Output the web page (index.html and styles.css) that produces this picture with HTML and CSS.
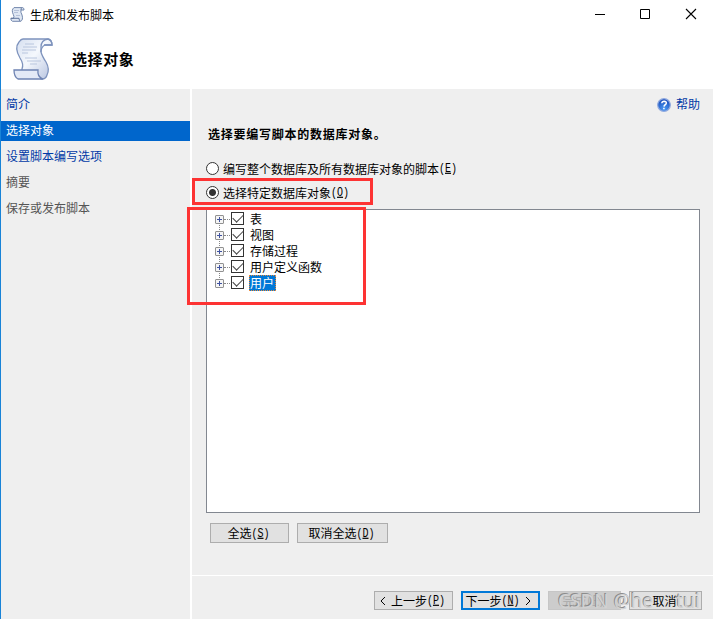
FILE: index.html
```html
<!DOCTYPE html>
<html lang="zh-CN">
<head>
<meta charset="utf-8">
<title>生成和发布脚本</title>
<link rel="stylesheet" href="styles.css">
</head>
<body>
<svg class="defs" width="0" height="0">
  <defs>
    <linearGradient id="paper" x1="0" y1="0" x2="1" y2="1">
      <stop offset="0" stop-color="#d5dff0"/><stop offset=".45" stop-color="#f5f8fd"/><stop offset="1" stop-color="#b4c1de"/>
    </linearGradient>
    <radialGradient id="ball" cx=".5" cy=".8" r=".8">
      <stop offset="0" stop-color="#4b9bf5"/><stop offset="1" stop-color="#1747b5"/>
    </radialGradient>
    <symbol id="scroll" viewBox="0 0 40 42">
      <path d="M10 1H35Q39 2 39 7L32 7Q28 9 28 14Q29 18 33 24Q37 31 34 37Q33 41 29 41L9 34V31Q11 26 7 20Q1 10 6 4Q8 1 10 1Z" fill="url(#paper)" stroke="#7e93bd" stroke-width="1.3"/>
      <path d="M35 1Q28 2 28 9V14M31 7H39Q39 2 35 1" fill="none" stroke="#7e93bd" stroke-width="1.3"/>
      <path d="M1 32H25Q24 39 30 41H5Q1 39 1 32Z" fill="#e3e9f6" stroke="#6e83b2" stroke-width="1.3"/>
      <path d="M12 6H21M10 9H24M9 12H23M9 15H15M12 20H24M14 23H28M17 26H24" stroke="#b9c6de" stroke-width="1"/>
    </symbol>
    <symbol id="scroll-small" viewBox="0 0 15 15">
      <path d="M4 .6H12.500Q14.300 1 14 3H11Q10.300 5 12 8Q13.500 13 10.500 14.300H2.500Q.6 13.500 .8 11.300H3.500Q4.500 9.500 3.300 7.500Q1 3 4 .6Z" fill="#dfe7f3" stroke="#7388ad"/>
      <path d="M1 11.300H9Q9 13.500 10.500 14.300M12 .8Q10.800 1.500 11 3" fill="none" stroke="#60759c"/>
      <path d="M4 3.500H9M4 5.500H8M6 8.500H10" stroke="#a9b8d0" stroke-width=".8"/>
    </symbol>
  </defs>
</svg>
<div class="window">
  <header class="header">
    <div class="titlebar">
      <svg class="title-icon"><use href="#scroll-small"/></svg>
      <span class="title">生成和发布脚本</span>
      <svg class="controls" width="102" height="12" viewBox="0 0 102 12" fill="none" stroke="#000">
        <path d="M0 6.500H10M45.500 1.500H54.500V10.500H45.500Z"/><path d="M91 1L101 11M101 1L91 11" stroke-width="1.1"/>
      </svg>
    </div>
    <div class="heading">
      <svg class="heading-icon"><use href="#scroll"/></svg>
      <h1>选择对象</h1>
    </div>
  </header>
  <div class="body">
    <nav class="steps">
      <a class="step">简介</a>
      <a class="step current">选择对象</a>
      <a class="step">设置脚本编写选项</a>
      <a class="step pending">摘要</a>
      <a class="step pending">保存或发布脚本</a>
    </nav>
    <main class="page">
      <section class="content">
        <div class="help">
          <svg width="14" height="14" viewBox="0 0 14 14"><circle cx="7" cy="7" r="6.300" fill="url(#ball)" stroke="#8fa9df" stroke-width="1.200"/><path d="M4.800 5.300Q5 3.200 7.200 3.200Q9.400 3.300 9.300 5.100Q9.200 6.200 7.900 7Q7.100 7.500 7 8.600M6.900 9.800V11.200" fill="none" stroke="#fff" stroke-width="1.500"/></svg>
          <span>帮助</span>
        </div>
        <h2>选择要编写脚本的数据库对象。</h2>
        <label class="option"><i class="radio"></i><span class="text">编写整个数据库及所有数据库对象的脚本<span class="key">(<u>E</u>)</span></span></label>
        <label class="option"><i class="radio on"></i><span class="text">选择特定数据库对象<span class="key">(<u>O</u>)</span></span></label>
        <div class="tree">
          <div class="node"><i class="plus"></i><i class="dots"></i><i class="check"></i><span>表</span></div>
          <div class="node"><i class="plus"></i><i class="dots"></i><i class="check"></i><span>视图</span></div>
          <div class="node"><i class="plus"></i><i class="dots"></i><i class="check"></i><span>存储过程</span></div>
          <div class="node"><i class="plus"></i><i class="dots"></i><i class="check"></i><span>用户定义函数</span></div>
          <div class="node"><i class="plus"></i><i class="dots"></i><i class="check"></i><span class="selected">用户</span></div>
        </div>
        <div class="tree-actions">
          <button class="btn all">全选<span class="key">(<u>S</u>)</span></button>
          <button class="btn none">取消全选<span class="key">(<u>D</u>)</span></button>
        </div>
      </section>
      <footer class="footer">
        <button class="btn prev"><svg class="chev" viewBox="0 0 6 10"><path d="M5 1L1 5L5 9"/></svg>上一步<span class="key">(<u>P</u>)</span></button>
        <button class="btn next">下一步<span class="key">(<u>N</u>)</span><svg class="chev" viewBox="0 0 6 10"><path d="M1 1L5 5L1 9"/></svg></button>
        <button class="btn finish">完成<span class="key">(<u>F</u>)</span></button>
        <button class="btn cancel"><span>取消</span></button>
        <div class="watermark"><span class="site">CSDN</span><span class="user">@he</span><span class="rest">tui</span></div>
      </footer>
    </main>
  </div>
  <div class="mark mark-option"></div>
  <div class="mark mark-tree"></div>
</div>
</body>
</html>
```
FILE: styles.css
```css
* { box-sizing: border-box; }
body { margin: 0; font: 12px/16px "Noto Sans CJK SC", sans-serif; color: #000; }
.defs { position: absolute; }
.window { position: relative; width: 713px; height: 619px; overflow: hidden; display: flex; flex-direction: column; background: #fff; border-left: 1px solid #1883d7; }
.header { height: 89px; flex: none; }
.titlebar { height: 29px; display: flex; align-items: center; padding: 0 16px 1px 9px; }
.title-icon { width: 15px; height: 15px; }
.title { margin-left: 5px; padding-top: 1px; flex: 1; }
.heading { display: flex; align-items: center; height: 60px; padding-left: 12px; }
.heading-icon { width: 40px; height: 42px; }
h1 { margin: 0 0 0 19px; font-size: 15px; line-height: 20px; letter-spacing: .6px; }
.body { flex: 1; display: flex; gap: 2px; }
.steps { width: 189px; background: #efefef; padding-top: 6px; display: flex; flex-direction: column; gap: 6px; }
.step { height: 20px; line-height: 18px; padding-left: 5px; color: #0039a6; }
.current { background: #0066cc; color: #fff; }
.pending { color: #555; }
.page { flex: 1; display: flex; flex-direction: column; gap: 1px; }
.content { height: 486px; background: #efefef; padding: 8px 13px 0 14px; }
.help { display: flex; justify-content: flex-end; align-items: center; gap: 5px; height: 16px; color: #0039a6; }
.help span { line-height: 14px; height: 16px; }
h2 { margin: 13px 0 0 2px; font-size: 12px; line-height: 16px; letter-spacing: .75px; }
.option { display: flex; align-items: center; height: 24px; }
h2 + .option { margin-top: 14px; }
.text { display: flex; align-items: center; padding-top: 1px; }
.text .key { padding-top: 1px; }
.radio { width: 13px; height: 13px; margin-right: 4px; border: 1px solid #333; border-radius: 50%; background: #fff; }
.on { background: radial-gradient(circle, #333 0 3px, #fff 4px); }
.key { display: inline-block; font-family: "Liberation Mono", monospace; font-size: 10px; line-height: 14px; transform: scaleY(1.2); }
.tree { height: 304px; margin-top: 5px; border: 1px solid #828790; background: #fff; padding: 1px 0 0 8px; }
.node { display: flex; align-items: center; height: 16px; position: relative; }
.plus { width: 9px; height: 9px; border: 1px solid #919191; border-radius: 1px; background: linear-gradient(#4053a0, #4053a0) center / 5px 1px no-repeat, linear-gradient(#4053a0, #4053a0) center / 1px 5px no-repeat, #f5f5f5; }
.node + .node::before { content: ""; position: absolute; left: 4px; top: -4px; height: 7px; border-left: 1px dotted #888; }
.dots { width: 6px; border-top: 1px dotted #888; }
.check { width: 13px; height: 13px; margin: -1px 5px 0 1px; border: 1px solid #333; background: #fff; position: relative; }
.check::after { content: ""; position: absolute; left: 1px; top: 1px; width: 9px; height: 5px; border: solid #444; border-width: 0 0 1.5px 1.5px; transform: rotate(-45deg); }
.node span { padding: 0 1px; height: 16px; line-height: 15px; }
.node .selected { padding: 0 2px 0 1px; background: #0078d7; color: #fff; outline: 1px dotted #e98a3c; outline-offset: -1px; }
.tree-actions { display: flex; gap: 8px; padding: 10px 0 0 4px; }
.btn { display: flex; align-items: center; justify-content: center; font: inherit; line-height: 16px; color: #000; padding: 0 2px 0 0; border: 1px solid #adadad; background: #e1e1e1; height: 20px; white-space: nowrap; }
.btn .key { padding-top: 1px; }
.all { width: 79px; }
.none { width: 91px; }
.footer { flex: 1; position: relative; display: flex; background: #efefef; padding: 15px 11px 0 0; justify-content: flex-end; }
.footer .btn { height: 19px; }
.prev, .next { width: 79px; margin-right: 8px; }
.footer .prev { padding-right: 7px; }
.footer .next { border: 2px solid #0078d7; padding: 0; }
.finish { width: 73px; margin-right: 8px; }
.footer .finish { background: #ccc; border-color: #c6c6c6; color: #aaa; }
.cancel { width: 73px; }
.cancel span { position: relative; z-index: 2; }
.chev { width: 6px; height: 10px; fill: none; stroke: #000; margin: 0 5px; }
.watermark { position: absolute; left: 366px; top: 12px; display: flex; font: 19px/26px "Noto Sans", sans-serif; color: #d2d2d2; text-shadow: -1px -1px 0 #8c8c8c; }
.user { margin-left: 5px; }
.rest { margin-left: 23px; }
.mark { position: absolute; border: 3px solid #fd3333; }
.mark-option { left: 191px; top: 178px; width: 181px; height: 27px; }
.mark-tree { left: 186px; top: 207px; width: 179px; height: 98px; }
```
